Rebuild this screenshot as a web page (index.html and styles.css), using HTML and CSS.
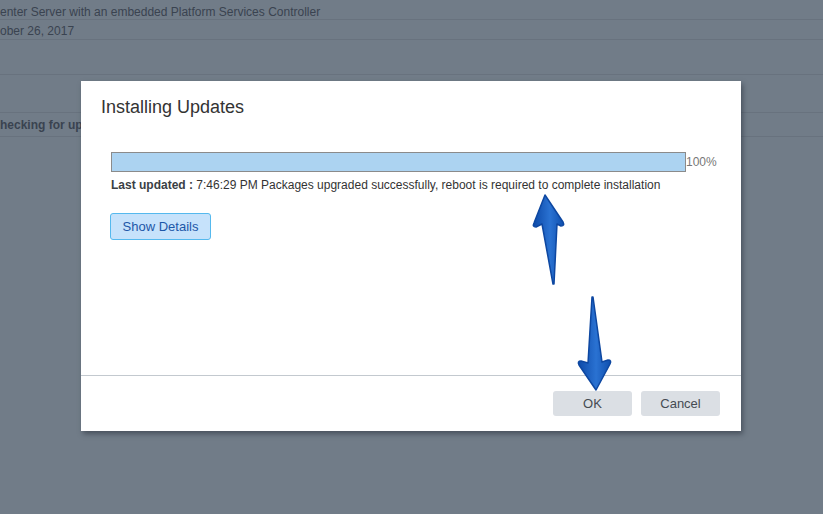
FILE: index.html
```html
<!DOCTYPE html>
<html lang="en">
<head>
	<meta charset="UTF-8">
	<title>Installing Updates</title>
	<link rel="stylesheet" href="styles.css">
</head>
<body>
	<div class="page">
		<div class="row r1">enter Server with an embedded Platform Services Controller</div>
		<div class="row r2">ober 26, 2017</div>
		<div class="row r3"></div>
		<div class="row r4"></div>
		<div class="row r5 bold">hecking for updates</div>
	</div>

	<div class="overlay">
		<div class="dialog">
			<div class="dialog-title">Installing Updates</div>
			<div class="dialog-body">
				<div class="progress">
					<div class="bar"><div class="fill" style="width: 100%;"></div></div>
					<span class="pct">100%</span>
				</div>
				<p class="status"><b>Last updated :</b> 7:46:29 PM Packages upgraded successfully, reboot is required to complete installation</p>
				<button class="btn-details">Show Details</button>
			</div>
			<div class="dialog-footer">
				<button class="btn">OK</button>
				<button class="btn">Cancel</button>
			</div>
		</div>
	</div>

	<!-- callout arrows -->
	<svg class="marks" width="823" height="514" viewBox="0 0 823 514">
		<defs>
			<linearGradient id="blue" x1="0" y1="0" x2="1" y2="0">
				<stop offset="0" stop-color="#0c49a8"/>
				<stop offset="0.55" stop-color="#2a72d2"/>
				<stop offset="1" stop-color="#0f4fae"/>
			</linearGradient>
		</defs>
		<path d="M545 195 L563 222 Q565 226 561 226 L557 224 L554 284 L553 284 L542 224 L536 227 Q532 227 534 223 Z" fill="url(#blue)" stroke="#0d47a1" stroke-width="1.5" stroke-linejoin="round"/>
		<path d="M596 390 L610 364 Q612 360 608 360 L602 362 L593 297 L592 297 L588 363 L581 361 Q577 361 579 365 Z" fill="url(#blue)" stroke="#0d47a1" stroke-width="1.5" stroke-linejoin="round"/>
	</svg>
</body>
</html>
```

FILE: styles.css
```css
body{
	margin: 0;
	width: 823px;
	height: 514px;
	overflow: hidden;
	background: #717c88;
	font-family: "Liberation Sans", Arial, sans-serif;
}
.page{
	color: #3a4350;
	font-size: 12px;
}
.row{
	box-sizing: border-box;
	border-bottom: 1px solid #68727e;
	white-space: nowrap;
	line-height: 16px;
}
.r1{ height: 20px; padding-top: 4px; }
.r2{ height: 20px; padding-top: 3px; }
.r3{ height: 35px; }
.r4{ height: 38px; }
.r5{ height: 24px; padding-top: 4px; }
.bold{ font-weight: bold; }

.overlay{
	position: absolute;
	left: 81px;
	top: 81px;
}
.dialog{
	width: 660px;
	height: 350px;
	background: #fff;
	box-shadow: 2px 3px 5px rgba(40,48,58,0.55);
	display: flex;
	flex-direction: column;
}
.dialog-title{
	padding: 16px 20px 0;
	font-size: 18px;
	color: #333;
	line-height: 20px;
}
.dialog-body{
	flex: 1;
	padding: 35px 30px 0;
}
.progress{
	display: flex;
	align-items: center;
}
.bar{
	box-sizing: border-box;
	flex-shrink: 0;
	width: 575px;
	height: 20px;
	border: 1px solid #8b8b8b;
	background: #fff;
}
.fill{
	height: 100%;
	background: #acd3f1;
}
.pct{
	font-size: 12px;
	color: #777;
	white-space: nowrap;
}
.status{
	margin: 6px 0 0;
	font-size: 12px;
	color: #333;
	line-height: 14px;
}
.status b{
	color: #3a3f45;
}
.btn-details{
	margin: 21px 0 0 -1px;
	width: 101px;
	height: 27px;
	border: 1px solid #55b9ee;
	border-radius: 3px;
	background: #c6e2fb;
	color: #1d57a8;
	font-family: inherit;
	font-size: 13px;
	padding: 0;
}
.dialog-footer{
	border-top: 1px solid #c3c9cf;
	height: 56px;
	box-sizing: border-box;
	padding: 15px 21px 0 0;
	display: flex;
	justify-content: flex-end;
	gap: 9px;
}
.btn{
	width: 79px;
	height: 25px;
	border: none;
	border-radius: 3px;
	background: #dbdfe4;
	color: #454b52;
	font-family: inherit;
	font-size: 13px;
	padding: 0;
}

.marks{
	position: absolute;
	left: 0;
	top: 0;
	pointer-events: none;
}
```
